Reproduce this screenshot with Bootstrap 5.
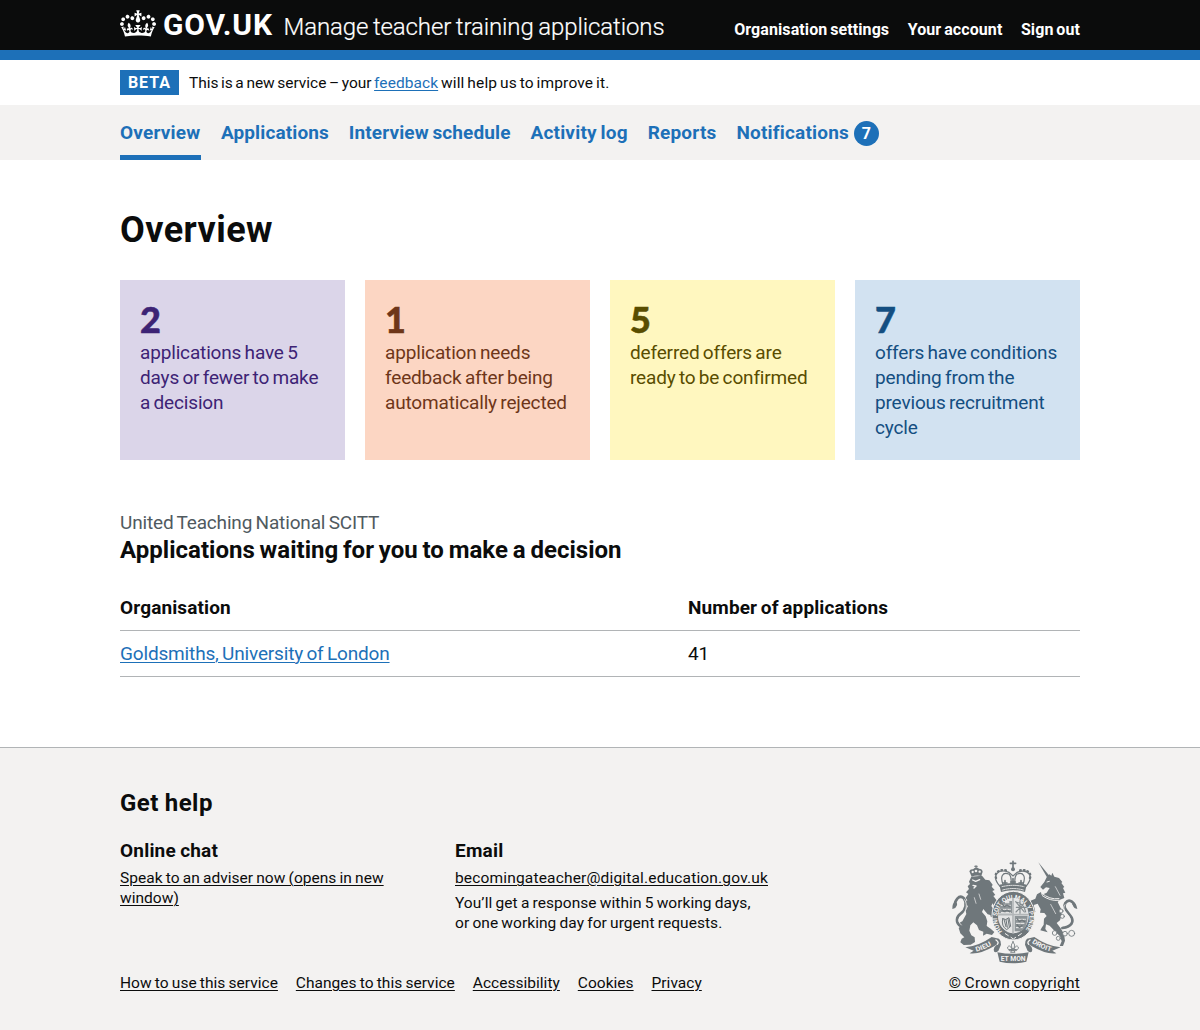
<!DOCTYPE html>
<html lang="en">
<head>
<meta charset="utf-8">
<meta name="viewport" content="width=device-width, initial-scale=1">
<title>Overview - Manage teacher training applications - GOV.UK</title>
<link rel="stylesheet" href="https://cdn.jsdelivr.net/npm/bootstrap@5.3.0/dist/css/bootstrap.min.css">
<style>
body{font-family:Roboto,"Liberation Sans",sans-serif;color:#0b0c0c;font-size:19px;line-height:25px;letter-spacing:-.16px;word-spacing:-1.2px}
.shell{width:960px;margin:0 auto}
.masthead{background:#0b0c0c;height:60px;border-bottom:10px solid #1d70b8}
.masthead a{color:#fff;text-decoration:none}
.masthead svg{width:36px;height:27px;margin-top:10px}
.wordmark{font-size:30px;line-height:30px;font-weight:700;letter-spacing:.85px;margin:10px 0 0 7px;width:120.5px}
.service{font-size:24px;line-height:30px;font-weight:300;letter-spacing:-.1px;margin-top:12px;-webkit-text-stroke:.2px #fff}
.acct{gap:18.5px;font-size:16px;font-weight:700;line-height:20px;padding-top:20px;letter-spacing:.09px}
.phase{height:45px;font-size:15.5px;line-height:20px;letter-spacing:.07px}
.phase-copy{padding-left:10px}
.phase-lead{letter-spacing:-.03px}
.phase-tail{letter-spacing:.16px}
.phase-tag{background:#1d70b8;color:#fff;font-size:16px;font-weight:700;letter-spacing:1px;height:25px;width:59px}
.mainnav{background:#f3f2f1;height:55px}
.mainnav .shell{gap:19.9px}
.mainnav a{font-weight:700;color:#1d70b8;height:55px;padding-top:15px;text-decoration:none;letter-spacing:.2px;white-space:nowrap}
.mainnav a.on{border-bottom:5px solid #1d70b8;width:81px}
.mainnav .tight{letter-spacing:.12px}
.count{background:#1d70b8;color:#fff;width:25px;height:25px;border-radius:50%;font-size:16px;margin:1px 0 0 5px}
h1{font-size:36px;line-height:40px;font-weight:700;margin:50px 0 30px;letter-spacing:.45px}
h2{font-size:24px;line-height:30px;font-weight:700;letter-spacing:.02px}
h3{font-size:19px;line-height:25px;font-weight:700;letter-spacing:.2px}
.tiles{gap:20px;margin-bottom:50px}
.tile{width:225px;height:180px;padding:20px;text-decoration:none}
.tile strong{display:block;font-family:Lato,Roboto,sans-serif;font-size:36px;font-weight:900;line-height:38px;margin-bottom:2px;-webkit-text-stroke:.5px currentColor}
.t-purple{background:#dbd5e9;color:#3d2375}
.t-orange{background:#fcd6c3;color:#6e3619}
.t-yellow{background:#fff7bf;color:#594d00}
.t-blue{background:#d2e2f1;color:#144e81}
.org{color:#505a5f}
.apps{margin:20px 0 70px;border-collapse:separate;border-spacing:0}
.apps th,.apps td{padding:10px 0;border-bottom:1px solid #b1b4b6;height:46px}
.apps th{letter-spacing:.13px}
.apps th:first-child{width:568px}
.ulink{color:#1d70b8;text-decoration:underline;text-decoration-thickness:1px;text-underline-offset:2px}
.foot{background:#f3f2f1;border-top:1px solid #b1b4b6;height:283px;padding-top:40px;font-size:15.5px;line-height:20px;letter-spacing:.03px;word-spacing:-.7px}
.foot a{color:#0b0c0c;text-decoration:underline;text-decoration-thickness:1px;text-underline-offset:2px}
.foot h2{letter-spacing:.5px}
.foot h3{margin-bottom:5px}
.foot .mail{letter-spacing:.17px}
.foot .copy{letter-spacing:.25px}
.help{width:335px}
.reply{padding-top:5px;letter-spacing:.05px}
.crest{width:126px;height:104px;margin:22px 2px 9px 0}
.crest text{font-family:Roboto,"Liberation Sans",sans-serif;font-weight:700;fill:#f3f2f1;letter-spacing:0;word-spacing:0}
.links{gap:17.9px;margin-top:40px}
</style>
</head>
<body>
<header class="masthead">
  <div class="shell d-flex">
    <svg viewBox="0 0 132 97" fill="#fff" aria-hidden="true"><path d="M25 30.2c3.5 1.5 7.7-.2 9.1-3.7 1.5-3.6-.2-7.8-3.9-9.2-3.6-1.4-7.6.3-9.1 3.9-1.4 3.5.3 7.5 3.9 9zM9 39.5c3.6 1.5 7.8-.2 9.2-3.7 1.5-3.6-.2-7.8-3.9-9.1-3.6-1.5-7.6.2-9.1 3.8-1.4 3.5.3 7.5 3.8 9zM4.4 57.2c3.5 1.5 7.7-.2 9.1-3.8 1.5-3.6-.2-7.7-3.9-9.1-3.5-1.5-7.6.3-9.1 3.8-1.4 3.5.3 7.6 3.9 9.1zm38.3-21.4c3.5 1.5 7.7-.2 9.1-3.8 1.5-3.6-.2-7.7-3.9-9.1-3.6-1.5-7.6.3-9.1 3.8-1.3 3.6.4 7.7 3.9 9.1zm64.4-5.6c-3.6 1.5-7.8-.2-9.1-3.7-1.5-3.6.2-7.8 3.8-9.2 3.6-1.4 7.7.3 9.2 3.9 1.3 3.5-.4 7.5-3.9 9zm15.9 9.3c-3.6 1.5-7.7-.2-9.1-3.7-1.5-3.6.2-7.8 3.7-9.1 3.6-1.5 7.7.2 9.2 3.8 1.5 3.5-.3 7.5-3.8 9zm4.7 17.7c-3.6 1.5-7.8-.2-9.2-3.8-1.5-3.6.2-7.7 3.9-9.1 3.6-1.5 7.7.3 9.2 3.8 1.3 3.5-.4 7.6-3.9 9.1zM89.3 35.8c-3.6 1.5-7.8-.2-9.2-3.8-1.4-3.6.2-7.7 3.9-9.1 3.6-1.5 7.7.3 9.2 3.8 1.4 3.6-.3 7.7-3.9 9.1zM69.7 17.7l8.9 4.7V9.3l-8.9 2.8c-.2-.3-.5-.6-.9-.9L72.4 0H59.6l3.5 11.2c-.3.3-.6.5-.9.9l-8.8-2.8v13.1l8.8-4.7c.3.3.6.7.9.9l-5 15.4v.1c-.2.8-.4 1.6-.4 2.4 0 4.1 3.1 7.5 7 8.1h.2c.3 0 .7.1 1 .1.4 0 .7 0 1-.1h.2c4-.6 7.1-4.1 7.1-8.1 0-.8-.1-1.7-.4-2.4V34l-5.1-15.4c.4-.2.7-.6 1-.9zM66 92.8c16.9 0 32.8 1.1 47.1 3.2 4-16.9 8.9-26.7 14-33.5l-9.6-3.4c1 4.9 1.1 7.2 0 10.2-1.5-1.4-3-4.3-4.2-8.7L108.6 76c2.8-2 5-3.2 7.5-3.3-4.4 9.4-10 11.9-13.6 11.2-4.3-.8-6.3-4.6-5.6-7.9 1-4.7 5.7-5.9 8-.5 4.3-8.7-3-11.4-7.6-8.8 7.1-7.2 7.9-13.5 2.1-21.1-8 6.1-8.1 12.3-4.5 20.8-4.7-5.4-12.1-2.5-9.5 6.2 3.4-5.2 7.9-2 7.2 3.1-.6 4.3-6.4 7.8-13.5 7.2-10.3-.9-10.9-8-11.2-13.8 2.5-.5 7.1 1.8 11 7.3L80.2 60c-4.1 4.4-8 5.3-12.3 5.4 1.4-4.4 8-11.6 8-11.6H55.5s6.4 7.2 7.9 11.6c-4.2-.1-8-1-12.3-5.4l1.4 16.4c3.9-5.5 8.5-7.7 10.9-7.3-.3 5.8-.9 12.8-11.1 13.8-7.2.6-12.9-2.9-13.5-7.2-.7-5 3.8-8.3 7.1-3.1 2.7-8.7-4.6-11.6-9.4-6.2 3.7-8.5 3.6-14.7-4.6-20.8-5.8 7.6-5 13.9 2.2 21.1-4.7-2.6-11.9.1-7.7 8.8 2.3-5.5 7.1-4.2 8.1.5.7 3.3-1.3 7.1-5.7 7.9-3.5.7-9-1.8-13.5-11.2 2.5.1 4.7 1.3 7.5 3.3l-4.7-15.4c-1.2 4.4-2.7 7.2-4.3 8.7-1.1-3-.9-5.3 0-10.2l-9.5 3.4c5 6.9 9.9 16.7 14 33.5 14.8-2.1 30.8-3.2 47.7-3.2z"/></svg>
    <a class="wordmark" href="#">GOV.UK</a>
    <a class="service" href="#">Manage teacher training applications</a>
    <nav class="acct d-flex ms-auto"><a href="#">Organisation settings</a><a href="#">Your account</a><a href="#">Sign out</a></nav>
  </div>
</header>
<div class="phase">
  <div class="shell d-flex align-items-center h-100">
    <span class="phase-tag d-flex align-items-center justify-content-center">BETA</span>
    <span class="phase-copy"><span class="phase-lead">This is a new service – your </span><a class="ulink" href="#">feedback</a><span class="phase-tail"> will help us to improve it.</span></span>
  </div>
</div>
<nav class="mainnav">
  <div class="shell d-flex">
    <a class="on" href="#">Overview</a><a class="tight" href="#">Applications</a><a class="tight" href="#">Interview schedule</a><a href="#">Activity log</a><a href="#">Reports</a>
    <a class="d-flex" href="#">Notifications<span class="count d-flex align-items-center justify-content-center">7</span></a>
  </div>
</nav>
<main class="shell">
  <h1>Overview</h1>
  <div class="tiles d-flex">
    <a class="tile t-purple" href="#"><strong>2</strong>applications have 5 days or fewer to make a decision</a>
    <a class="tile t-orange" href="#"><strong>1</strong>application needs feedback after being automatically rejected</a>
    <a class="tile t-yellow" href="#"><strong>5</strong>deferred offers are ready to be confirmed</a>
    <a class="tile t-blue" href="#"><strong>7</strong>offers have conditions pending from the previous recruitment cycle</a>
  </div>
  <div class="org">United Teaching National SCITT</div>
  <h2 class="mb-0">Applications waiting for you to make a decision</h2>
  <table class="apps w-100">
    <thead><tr><th>Organisation</th><th>Number of applications</th></tr></thead>
    <tbody><tr><td><a class="ulink" href="#">Goldsmiths, University of London</a></td><td>41</td></tr></tbody>
  </table>
</main>
<footer class="foot">
  <div class="shell d-flex">
    <div class="flex-grow-1">
      <h2 class="mb-0">Get help</h2>
      <div class="d-flex mt-3 pt-1">
        <div class="help"><h3>Online chat</h3><a href="#">Speak to an adviser now (opens in new<br>window)</a></div>
        <div><h3>Email</h3><a class="mail" href="#">becomingateacher@digital.education.gov.uk</a>
          <div class="reply">You’ll get a response within 5 working days,<br>or one working day for urgent requests.</div></div>
      </div>
      <div class="links d-flex"><a href="#">How to use this service</a><a href="#">Changes to this service</a><a href="#">Accessibility</a><a href="#">Cookies</a><a href="#">Privacy</a></div>
    </div>
    <div class="d-flex flex-column align-items-end justify-content-end">
      <svg class="crest" viewBox="36 32 378 312" fill="#6f777b" stroke-linecap="round" stroke-linejoin="round" aria-hidden="true">
        <!-- lion with its crown -->
        <path d="M95 82L88 66Q91 58 99 60Q108 50 117 58Q127 58 128 67L124 80Q109 76 95 82Z"/>
        <g fill="#f3f2f1"><circle cx="98" cy="68" r="3.5"/><circle cx="108" cy="65" r="4"/><circle cx="119" cy="67" r="3.5"/></g>
        <path d="M108 49v7M104 51h8" stroke="#6f777b" stroke-width="3"/>
        <path d="M94 82L126 79L136 91L148 93L158 106L155 112L164 122L157 125L166 137L160 140L171 154L162 170L158 162L154 170L162 182L173 188L165 199L153 204L151 197L143 195L130 179L126 188L137 201L142 216L140 230L152 238L163 248L156 257L140 253L129 259L130 247L117 242L111 228L100 219L91 228L88 244L94 258L104 264L105 278L92 286L71 287L61 279L65 268L73 264L61 252L56 236L62 231L57 221L67 216L79 194L77 184L84 170L75 163L82 153L77 145L85 134L78 129L87 119L83 111L90 104L87 97Z"/>
        <path d="M98 92l9 4 12-5M99 108l9 2-6 6" fill="none" stroke="#f3f2f1" stroke-width="4"/>
        <path d="M117 134l5 16M103 145l5 17" fill="none" stroke="#f3f2f1" stroke-width="2"/>
        <path d="M63 231C45 220 49 202 62 193C78 182 82 160 71 146C57 134 43 155 45 169" fill="none" stroke="#6f777b" stroke-width="8"/>
        <path d="M64 227C50 214 59 203 68 195C81 183 82 163 74 151" fill="none" stroke="#f3f2f1" stroke-width="2.5"/>
        <path d="M37 179Q36 161 46 157Q55 163 49 170Q48 177 37 179Z"/>
        <!-- unicorn -->
        <path d="M295 39L328 79L321 84Z"/>
        <path d="M320 84L328 75L334 79L337 70L343 82L357 86L367 98L364 101L373 113L369 116L376 130L369 132L373 146L360 151L353 158L363 178L365 197L360 213L350 221L362 237L372 254L375 274L369 290L359 290L365 276L360 261L344 245L329 229L318 225L316 239L323 249L301 243L305 235L311 226L312 208L320 200L313 191L300 190L302 180L293 163L281 167L286 187L281 196L269 188L276 181L269 165L272 154L286 148L291 135L303 128L305 137L320 130L329 116L318 114L309 121L301 113L313 98Z"/>
        <path d="M321 98l7-2M305 131q23 21 52 17M307 139q23 17 50 14" fill="none" stroke="#f3f2f1" stroke-width="3"/>
        <path d="M346 112l14 26M332 165l15 28" fill="none" stroke="#f3f2f1" stroke-width="2"/>
        <path d="M367 236C396 231 401 218 395 205C386 188 366 177 376 161C386 148 399 155 404 169" fill="none" stroke="#6f777b" stroke-width="8"/>
        <path d="M374 229C400 219 389 203 382 195C370 182 369 174 375 166" fill="none" stroke="#f3f2f1" stroke-width="2.5"/>
        <path d="M412 179Q409 161 400 158Q394 165 400 170Q401 177 412 179Z"/>
        <g fill="#f3f2f1" stroke="#6f777b" stroke-width="2.5"><circle cx="363" cy="185" r="6"/><circle cx="367" cy="201" r="6"/><circle cx="344" cy="251" r="7"/><circle cx="355" cy="267" r="6"/><circle cx="375" cy="253" r="7"/><circle cx="395" cy="252" r="9"/></g>
        <!-- royal crown -->
        <path d="M219 36v21M211 42h16" stroke="#6f777b" stroke-width="5"/>
        <circle cx="219" cy="60" r="6"/>
        <path d="M180 111C151 78 175 57 207 69L219 80L231 69C264 57 285 79 258 111M190 108C179 82 187 66 208 75C214 81 214 97 213 106M248 108C259 82 251 66 230 75C224 81 224 97 225 106" fill="none" stroke="#6f777b" stroke-width="3.5"/>
        <path d="M168 86C161 66 187 57 204 65M270 86C277 66 251 57 234 65" fill="none" stroke="#6f777b" stroke-width="7" stroke-dasharray="2 9"/>
        <path d="M195 94v16M189 101h12M219 88v20M212 98h14M243 94v16M237 101h12" stroke="#6f777b" stroke-width="5"/>
        <path d="M178 106Q219 96 260 106L255 128Q219 117 183 128Z"/>
        <path d="M186 112Q219 104 252 112M188 122Q219 113 250 122" fill="none" stroke="#f3f2f1" stroke-width="2.5" stroke-dasharray="8 3"/>
        <!-- garter and quartered shield -->
        <ellipse cx="220" cy="199" rx="64" ry="73" stroke="#f3f2f1" stroke-width="3"/>
        <ellipse cx="220" cy="199" rx="45" ry="52" fill="#e3e4e4" stroke="#f3f2f1" stroke-width="2"/>
        <path id="garter" d="M187 246A48.500 55.500 0 1 1 253 246" fill="none"/>
        <text font-size="19"><textPath href="#garter" textLength="246" lengthAdjust="spacingAndGlyphs">HONI SOIT QUI MAL Y PENSE</textPath></text>
        <path d="M196 253l9 6M235 259l9-6M213 264l7 5 7-5" stroke="#f3f2f1" stroke-width="3" fill="none"/>
        <path d="M186 158h9v4h13v-7h8v37h-39q0-21 9-34ZM224 200h39q-1 27-11 39l-10 7h-18Z" fill="#8d9497"/>
        <path d="M184 168h27M183 180h28M184 190h27M229 210h27M229 222h26M229 235h18" stroke="#f3f2f1" stroke-width="3" stroke-dasharray="10 3"/>
        <path d="M186 163l7 9 8-5 8 5M185 180l8 7 8-5 8 5M231 208l7 9 8-5 8 5M231 226l7 8 8-5" fill="none" stroke="#6f777b" stroke-width="4"/>
        <path d="M227 157l26 31M251 163l-23 25M240 154v38M229 174h30M228 158q24 4 29 30" fill="none" stroke="#858c8f" stroke-width="3.500"/>
        <path d="M188 208q9 7 19-3l5 26-12 10Q183 231 188 208M192 210l6 22M198 211l4 23M204 209l4 23" fill="none" stroke="#6f777b" stroke-width="3"/>
        <path d="M219 148v102M176 196h88" stroke="#b2b6b8" stroke-width="5"/>
        <!-- motto ribbon -->
        <path d="M76 294Q117 290 155 263L177 268Q184 274 183 286L175 305Q162 314 161 301Q163 291 172 285L162 291Q120 316 89 312L101 304Z"/>
        <path d="M362 294Q321 290 283 263L261 268Q254 274 255 286L263 305Q276 314 277 301Q275 291 266 285L276 291Q318 316 349 312L337 304Z"/>
        <path d="M168 272Q178 279 172 285M270 272Q260 279 266 285" stroke="#f3f2f1" stroke-width="4" fill="none"/>
        <path d="M172 309Q219 318 266 309L259 337Q219 347 179 337Z"/>
        <path id="dieu" d="M109 307Q137 300 161 283" fill="none"/>
        <path id="droit" d="M275 280Q304 301 341 308" fill="none"/>
        <text font-size="20"><textPath href="#dieu" textLength="50" lengthAdjust="spacingAndGlyphs">DIEU</textPath></text>
        <text font-size="20"><textPath href="#droit" textLength="64" lengthAdjust="spacingAndGlyphs">DROIT</textPath></text>
        <text x="182" y="335" font-size="22" textLength="75" lengthAdjust="spacingAndGlyphs">ET MON</text>
        <path d="M219 277Q210 287 216 298H222Q228 287 219 277ZM215 300Q202 306 203 293Q209 285 215 297ZM223 300Q236 306 235 293Q229 285 223 297ZM209 301h20v3h-20ZM217 302h4l4 7h-12Z" fill="none" stroke="#6f777b" stroke-width="2.500"/>
      </svg>
      <a class="copy" href="#">© Crown copyright</a>
    </div>
  </div>
</footer>
<script src="https://cdn.jsdelivr.net/npm/bootstrap@5.3.0/dist/js/bootstrap.bundle.min.js"></script>
</body>
</html>
